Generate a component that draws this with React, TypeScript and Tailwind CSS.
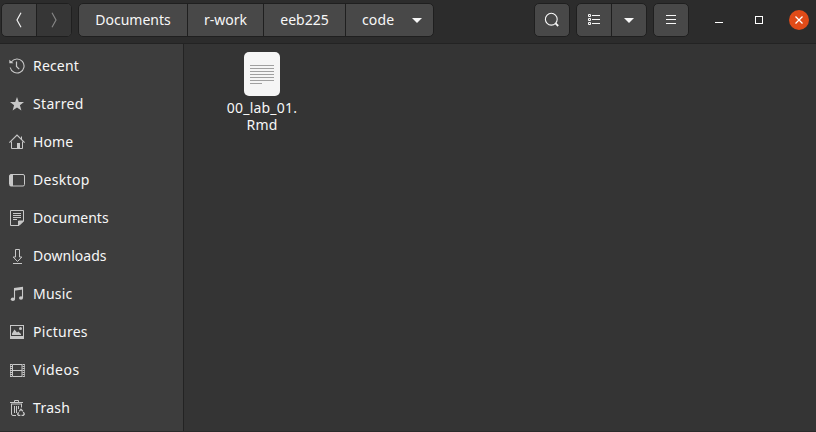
import type { ReactNode } from "react";

const icons: Record<string, ReactNode> = {
  Recent: (
    <g fill="none" stroke="currentColor" strokeWidth="1">
      <path d="M2.300 4A7 7 0 1 1 1.200 9.500" strokeWidth="1.100" />
      <path d="M7.500 3.500v5l2.700 2.600" strokeWidth="1.200" />
      <path d="M.3 1.700V5.300H4.500Z" fill="currentColor" stroke="none" />
    </g>
  ),
  Starred: <path fill="currentColor" d="M8 1l1.800 4.900 5.200.2-4.100 3.200 1.500 5.200L8 11.600l-4.400 2.900 1.500-5.200L1 6.100l5.200-.2Z" />,
  Home: (
    <g fill="none" stroke="currentColor">
      <path d="M.4 8.600 8 1l7.600 7.600" strokeWidth="1.200" />
      <path d="M2.500 7.500v7H8M13.500 7.500v7H11" />
      <path d="M12.500 2.500v3" />
      <path d="M8 9h3v6H8Z" fill="currentColor" stroke="none" />
    </g>
  ),
  Desktop: (
    <g>
      <rect x=".5" y="2.500" width="15" height="11.500" rx="1.500" fill="none" stroke="currentColor" />
      <path d="M1 3h3v11H1z" fill="currentColor" />
    </g>
  ),
  Documents: (
    <g fill="none" stroke="currentColor">
      <path d="M1.500.5h13v10.500l-4.500 4.500h-8.500Z" />
      <path d="M4 3.500h8M4 5.500h8M4 7.500h8M4 9.500h4" />
      <path d="M9.500 15.500V11h5Z" fill="currentColor" />
    </g>
  ),
  Downloads: (
    <path d="M6.500 1.500h4v7.500h2.300L8.500 13.500 4.200 9h2.300ZM4 15.500h9" fill="none" stroke="currentColor" />
  ),
  Music: (
    <g fill="none" stroke="currentColor">
      <path d="M5.500 13V2.500M13.500 1.300V12" strokeWidth="1.100" />
      <path d="M5 1.900 14 .7v2.800L5 4.700Z" fill="currentColor" stroke="none" />
      <ellipse cx="3.900" cy="13.200" rx="2.100" ry="1.800" fill="currentColor" stroke="none" />
      <ellipse cx="12" cy="12" rx="2" ry="1.800" fill="currentColor" stroke="none" />
    </g>
  ),
  Pictures: (
    <g fill="currentColor">
      <path fillRule="evenodd" d="M1 1h14v14H1zM2 2v10h12V2z" />
      <path d="M3 11V9.500l2.500-4L8 8.500l1.300-1L12 10v1Z" />
      <circle cx="11.500" cy="4.500" r="1.500" />
    </g>
  ),
  Videos: (
    <g fill="none" stroke="currentColor">
      <path d="M3.500 2.500h9.500v12H3.500zM3.500 8.500h9.500" />
      <path d="M2 2v13M14.500 2v13" strokeDasharray="1 1" strokeWidth="2" />
      <path d="M1.500 2v13M15.500 2v13" strokeWidth=".7" />
    </g>
  ),
  Trash: (
    <g fill="none" stroke="currentColor">
      <path d="M5.500 2V.5h4V2" />
      <path d="M1 2.500h13M2 4h11" strokeWidth="1.200" />
      <path d="M2.500 4v10q0 1.500 1.500 1.500h3M12.500 4v3.500" />
      <path d="M5.500 6v7M7.500 6v7M9.500 6v3" />
      <path d="M10.300 11.300 12 9.200l1.800 2M14.300 12l1 2-1 1.400h-1.800M11.400 15.400H9.500l-.9-1.200 1-1.800" strokeWidth="1.300" />
    </g>
  ),
};

const places = [
  { name: "Recent", tracking: "tracking-[0.180px]" },
  { name: "Starred", tracking: "tracking-[0.320px]" },
  { name: "Home", tracking: "tracking-[0.100px]" },
  { name: "Desktop", tracking: "tracking-[0.330px]" },
  { name: "Documents", tracking: "tracking-[0.020px]" },
  { name: "Downloads", tracking: "tracking-[0.030px]" },
  { name: "Music", tracking: "tracking-[0.200px]" },
  { name: "Pictures", tracking: "tracking-[0.280px]" },
  { name: "Videos", tracking: "tracking-[0.500px]" },
  { name: "Trash", tracking: "tracking-[0.300px]" },
];

const group = "flex h-[34px] shrink-0 overflow-hidden rounded-[5px] border border-[#1f1f1f] bg-[#484848]";
const cell = "flex items-center justify-center";

function DownTriangle() {
  return (
    <svg width="10" height="5" viewBox="0 0 10 5" fill="currentColor">
      <path d="M0 0h10L5 5Z" />
    </svg>
  );
}

export default function App() {
  return (
    <div className="flex h-[432px] w-[816px] flex-col overflow-hidden border-b border-[#2b2b2b] bg-[#343434] font-['Noto_Sans',sans-serif] text-[14px] text-[#f7f7f7]">
      <header className="flex h-[44px] shrink-0 items-start border-b border-[#232323] bg-[#2c2c2c] pt-[3px] pl-px">
        <div className={group + " w-[71px]"}>
          <button className={cell + " w-[35px] border-r border-[#1f1f1f]"}>
            <svg width="6" height="16" viewBox="0 0 6 16" fill="none" stroke="#f0f0f0" strokeWidth="1.200">
              <path d="M5 .8 1 8l4 7.200" />
            </svg>
          </button>
          <button className={cell + " w-[34px] bg-[#363636]"}>
            <svg width="6" height="16" viewBox="0 0 6 16" fill="none" stroke="#858585" strokeWidth="1.200">
              <path d="m1 .8 4 7.200-4 7.200" />
            </svg>
          </button>
        </div>

        <nav className={group + " ml-[6px] w-[356px]"}>
          <button className={cell + " w-[109px] border-r border-[#1f1f1f] pb-0.5"}>Documents</button>
          <button className={cell + " w-[76px] border-r border-[#1f1f1f] pb-0.5"}>r-work</button>
          <button className={cell + " w-[82px] border-r border-[#1f1f1f] pb-0.5"}>eeb225</button>
          <button className={cell + " w-[87px] justify-start gap-[17px] pl-4"}>
            <span className="w-[33px] pb-0.5 text-left tracking-[0.150px]">code</span>
            <DownTriangle />
          </button>
        </nav>

        <button className={group + " ml-[100px] w-[36px] items-center justify-center"}>
          <svg width="16" height="16" viewBox="0 0 16 16" fill="none" stroke="currentColor">
            <circle cx="7.300" cy="7.200" r="5.900" strokeWidth="1.100" />
            <path d="m11.600 11.400 2.600 2.600" strokeWidth="1.800" />
          </svg>
        </button>
        <div className={group + " ml-[6px] w-[71px]"}>
          <button className={cell + " w-[35px] border-r border-[#1f1f1f]"}>
            <svg width="12" height="12" viewBox="0 0 12 12" fill="none" stroke="currentColor">
              <path d="M.5.5h2v2h-2zM.5 4.500h2v2h-2zM.5 8.500h2v2h-2z" />
              <path d="M4 1.500h8M4 5.500h8M4 9.500h8" />
            </svg>
          </button>
          <button className={cell + " w-[34px]"}>
            <DownTriangle />
          </button>
        </div>
        <button className={group + " ml-[6px] w-[36px] items-center justify-center"}>
          <svg width="10" height="10" viewBox="0 0 10 10" stroke="currentColor">
            <path d="M0 .5h10M0 4.500h10M0 8.500h10" />
          </svg>
        </button>

        <div className="ml-[26px] flex h-[34px] items-center">
          <span className="mt-[5px] h-px w-2 bg-white" />
          <span className="ml-8 size-2 border border-white" />
          <button className="ml-[26px] flex size-5 items-center justify-center rounded-full bg-[#e04b18]">
            <svg width="8" height="8" viewBox="0 0 8 8" stroke="white" strokeWidth="1.300">
              <path d="m.5.5 7 7M7.500.5l-7 7" />
            </svg>
          </button>
        </div>
      </header>

      <div className="flex min-h-0 flex-1">
        <aside className="w-[184px] shrink-0 border-r border-[#232323] bg-[#3d3d3d] pt-[3px]">
          {places.map(({ name, tracking }) => (
            <div key={name} className="flex h-[38px] items-center gap-2 pl-[9px]">
              <svg width="16" height="16" viewBox="0 0 16 16" className="text-[#c8c8c8]">
                {icons[name]}
              </svg>
              <span className={"pb-0.5 " + tracking}>{name}</span>
            </div>
          ))}
        </aside>
        <main className="pt-2 pl-[38px]">
          <div className="flex w-20 flex-col items-center">
            <svg width="36" height="44" viewBox="0 0 36 44">
              <rect width="36" height="44" rx="5" fill="#f5f5f5" />
              <path
                d="M6 13.500h24M6 16.500h24M6 19.500h24M6 22.500h24M6 25.500h24M6 28.500h24M6 31.500h12"
                stroke="#a0a0a0"
              />
            </svg>
            <p className="mt-[3px] text-center leading-[17px] tracking-[0.200px] whitespace-nowrap">
              00_lab_01.
              <br />
              Rmd
            </p>
          </div>
        </main>
      </div>
    </div>
  );
}
